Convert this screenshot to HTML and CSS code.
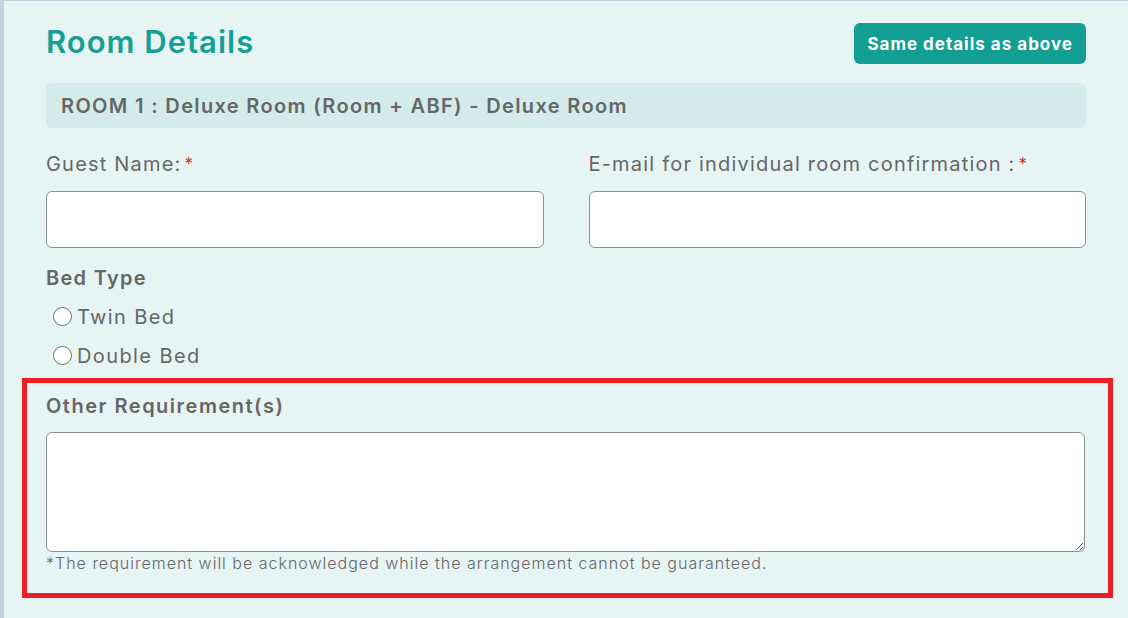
FILE: index.html
```html
<!DOCTYPE html>
<html lang="en">
<head>
    <meta charset="UTF-8">
    <title>Room Details</title>
    <link rel="stylesheet" href="styles.css">
</head>
<body>
    <div class="panel">
        <div class="panel-head">
            <h2>Room Details</h2>
            <button type="button" class="btn-same">Same details as above</button>
        </div>
        <div class="room-bar">ROOM 1 : Deluxe Room (Room + ABF) - Deluxe Room</div>

        <div class="field-row">
            <div class="field">
                <label for="guest">Guest Name:<span class="req">*</span></label>
                <input type="text" id="guest">
            </div>
            <div class="field">
                <label for="email">E-mail for individual room confirmation :<span class="req">*</span></label>
                <input type="text" id="email">
            </div>
        </div>

        <div class="bed-type">
            <h4>Bed Type</h4>
            <label class="radio"><input type="radio" name="bed">Twin Bed</label>
            <label class="radio"><input type="radio" name="bed">Double Bed</label>
        </div>

        <div class="highlight">
            <h4 class="req-title">Other Requirement(s)</h4>
            <textarea></textarea>
            <p class="note">*The requirement will be acknowledged while the arrangement cannot be guaranteed.</p>
        </div>
    </div>
</body>
</html>
```

FILE: styles.css
```css
body {
    margin: 0;
    padding: 0;
    background-color: #c6d2e1;
    font-family: 'Inter', 'Open Sans', sans-serif;
    color: #666;
    height: 618px;
    overflow: hidden;
}
.panel {
    margin-left: 4px;
    margin-top: 1px;
    background-color: #e6f4f3;
    padding: 0 42px 40px 42px;
    height: 617px;
    box-sizing: border-box;
}
.panel-head {
    display: flex;
    justify-content: space-between;
    align-items: center;
    padding-top: 22px;
}
h2 {
    margin: -3px 0 0 0;
    font-size: 31px;
    line-height: 34px;
    font-weight: 600;
    color: #179f95;
    letter-spacing: 1px;
}
.btn-same {
    background-color: #139e94;
    color: white;
    border: none;
    border-radius: 6px;
    height: 41px;
    padding: 0 13px;
    font-family: inherit;
    font-size: 17px;
    font-weight: 700;
    letter-spacing: 1px;
}
.room-bar {
    margin-top: 19px;
    background-color: #d3eceb;
    border-radius: 6px;
    height: 45px;
    display: flex;
    align-items: center;
    padding-left: 15px;
    font-size: 20px;
    font-weight: 600;
    letter-spacing: 1.35px;
}
.field-row {
    display: flex;
    gap: 45px;
    margin-top: 25px;
}
.field {
    flex: 1;
}
.field label {
    display: block;
    font-size: 20px;
    line-height: 22px;
    letter-spacing: 1.2px;
    margin-bottom: 16px;
}
.req {
    color: #f21d1d;
    font-size: 17px;
    vertical-align: top;
    margin-left: 3px;
}
.field input {
    width: 100%;
    box-sizing: border-box;
    height: 57px;
    border: 1px solid #8f8f8f;
    border-radius: 6px;
    background: white;
}
h4 {
    margin: 0;
    font-size: 20px;
    line-height: 22px;
    font-weight: 600;
    letter-spacing: 1.3px;
}
h4.req-title {
    letter-spacing: 1.5px;
}
.bed-type {
    margin-top: 19px;
}
.radio {
    display: flex;
    align-items: center;
    font-size: 20px;
    line-height: 24px;
    letter-spacing: 1.4px;
    margin-top: 16px;
    margin-left: 7px;
    height: 24px;
}
.radio + .radio {
    margin-top: 15px;
}
.radio input {
    appearance: none;
    width: 19px;
    height: 19px;
    margin: 0 5px 2px 0;
    border: 1.5px solid #707070;
    border-radius: 50%;
    background: white;
    box-sizing: border-box;
}
.highlight {
    margin: 10px -27px 0 -24px;
    border: 5px solid #ee1c25;
    padding: 12px 23px 21px 19px;
}
.highlight textarea {
    display: block;
    width: 100%;
    box-sizing: border-box;
    height: 120px;
    margin-top: 15px;
    border: 1px solid #8f8f8f;
    border-radius: 6px;
    background: white;
    resize: vertical;
}
.note {
    margin: 2px 0 0 0;
    font-size: 16px;
    line-height: 18px;
    font-weight: 300;
    letter-spacing: 1px;
}
```
